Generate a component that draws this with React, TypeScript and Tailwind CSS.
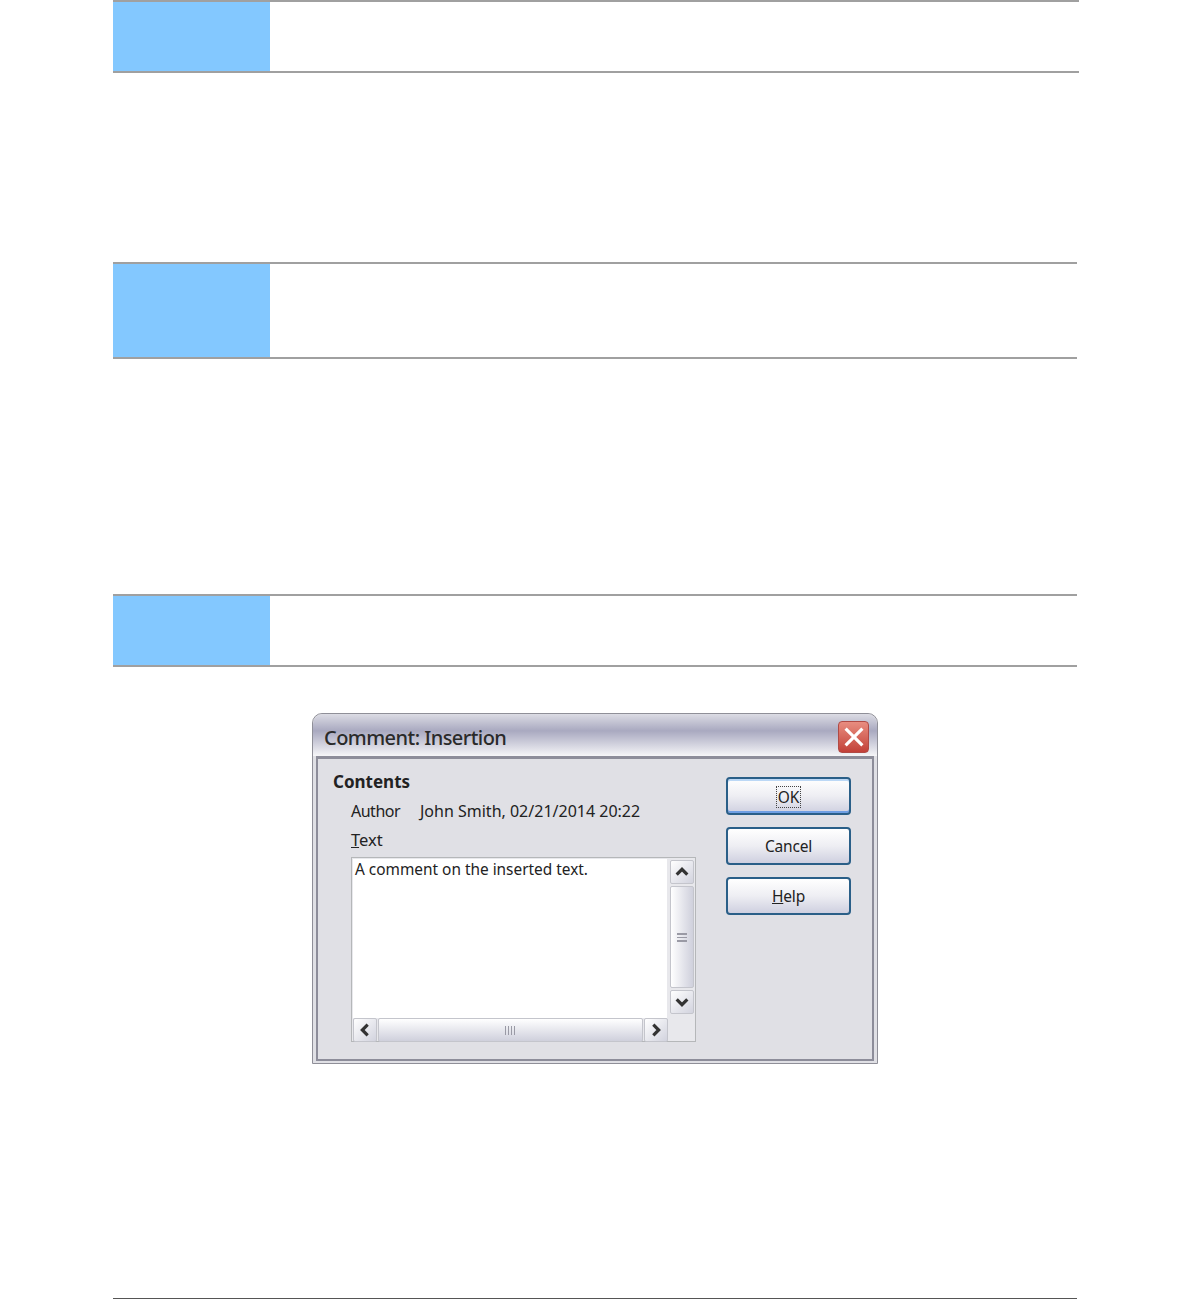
const font = "font-['Noto_Sans',sans-serif]";

const Note = ({ height, right }: { height: string; right: string }) => (
  <div className={`flex ${height} ${right} border-y-2 border-[#a0a0a0]`}>
    <div className="w-[157px] bg-[#83c8ff]"></div>
  </div>
);

const Chevron = ({ dir }: { dir: "up" | "down" | "left" | "right" }) => {
  const points = {
    up: "2,8 6,4 10,8",
    down: "2,4 6,8 10,4",
    left: "8,2 4,6 8,10",
    right: "4,2 8,6 4,10",
  };
  return (
    <svg width="16" height="16" viewBox="0 0 12 12" fill="none">
      <polyline points={points[dir]} stroke="#333" strokeWidth="2.4" />
    </svg>
  );
};

const ScrollButton = ({ dir }: { dir: "up" | "down" | "left" | "right" }) => (
  <div className="flex h-6 w-6 shrink-0 items-center justify-center rounded-[2px] border border-[#c4c5cc] bg-gradient-to-br from-white to-[#d2d3de]">
    <Chevron dir={dir} />
  </div>
);

const DialogButton = ({ children, focused }: { children: React.ReactNode; focused?: boolean }) => (
  <div
    className={`flex h-[38px] w-[125px] items-center justify-center rounded-[4px] border-2 border-[#2a5f88] bg-gradient-to-b from-white via-[#eeeef3] to-[#cfd0e0] pt-[2px] text-[15.5px] tracking-[-0.2px] text-[#222] ${
      focused ? "shadow-[inset_0_2px_0_#bcd8f6,inset_0_-2px_0_#6f9fe3]" : ""
    }`}
  >
    {children}
  </div>
);

const Dialog = () => (
  <div className={`mx-auto mt-[46px] h-[351px] w-[566px] rounded-t-[10px] border border-[#8f8f98] bg-[#e0e0e5] ${font} text-[#222]`}>
    <div className="flex h-[42px] items-center justify-between rounded-t-[10px] bg-gradient-to-b from-[#dcdce4] via-[#a9a9c0] via-40% to-[#f6f6f8] pl-[11px] pr-[8px] pt-[6px]">
      <span className="text-[20px] leading-none font-medium tracking-[-0.55px] text-[#2a2a2a]">Comment: Insertion</span>
      <div className="mb-[2px] flex h-8 w-[31px] items-center justify-center rounded-[4px] border border-[#b04a45] bg-gradient-to-b from-[#e88d80] to-[#c23f38]">
        <svg width="24" height="24" viewBox="0 0 20 20" fill="none">
          <path d="M3 3 L17 17 M17 3 L3 17" stroke="#fff" strokeWidth="2.6" />
        </svg>
      </div>
    </div>
    <div className="mx-[3px] flex h-[305px] border-2 border-t-[3px] border-[#8d8d9a] pl-[15px]">
      <div className="w-[363px]">
        <div className="mt-[11px] text-[17px] leading-[24px] font-bold">Contents</div>
        <div className="mt-[5px] flex pl-[18px] text-[16px] leading-[24px]">
          <span className="w-[69px] tracking-[-0.5px]">Author</span>
          <span>John Smith, 02/21/2014 20:22</span>
        </div>
        <div className="mt-[5px] pl-[18px] text-[16.5px] leading-[24px]">
          <span className="underline">T</span>ext
        </div>
        <div className="mt-[5px] ml-[18px] h-[185px] w-[345px] border border-[#b5b7b9] bg-[#e8e8ec] p-px">
          <div className="flex h-[159px]">
            <div className="w-[318px] bg-white px-[2px] text-[15.4px] leading-[21px]">A comment on the inserted text.</div>
            <div className="mt-px ml-[3px] flex h-[154px] w-6 flex-col gap-[2px]">
              <ScrollButton dir="up" />
              <div className="flex flex-1 items-center justify-center rounded-[2px] border border-[#c4c5cc] bg-gradient-to-r from-white to-[#cfd0dc]">
                <div className="h-[9px] w-[10px] border-y border-[#9a9aa5] bg-[repeating-linear-gradient(#9a9aa5_0_1px,transparent_1px_3px)]"></div>
              </div>
              <ScrollButton dir="down" />
            </div>
          </div>
          <div className="flex h-6 w-[315px]">
            <ScrollButton dir="left" />
            <div className="mx-[1px] flex flex-1 items-center justify-center rounded-[2px] border border-[#c4c5cc] bg-gradient-to-b from-white to-[#cfd0dc]">
              <div className="h-[9px] w-[11px] bg-[repeating-linear-gradient(90deg,#9a9aa5_0_1px,transparent_1px_3px)]"></div>
            </div>
            <ScrollButton dir="right" />
          </div>
        </div>
      </div>
      <div className="ml-[30px] flex flex-col gap-3 pt-[18px]">
        <DialogButton focused>
          <span className="border border-dotted border-[#444] px-px leading-[20px]">OK</span>
        </DialogButton>
        <DialogButton>Cancel</DialogButton>
        <DialogButton>
          <span>
            <span className="underline">H</span>elp
          </span>
        </DialogButton>
      </div>
    </div>
  </div>
);

export default function App() {
  return (
    <div className="h-[1299px] overflow-hidden bg-white pl-[113px]">
      <Note height="h-[73px]" right="w-[966px]" />
      <div className="h-[189px]"></div>
      <Note height="h-[97px]" right="w-[964px]" />
      <div className="h-[235px]"></div>
      <Note height="h-[73px]" right="w-[964px]" />
      <div className="w-[964px]">
        <Dialog />
      </div>
      <div className="mt-[234px] h-px w-[964px] bg-[#555]"></div>
    </div>
  );
}
